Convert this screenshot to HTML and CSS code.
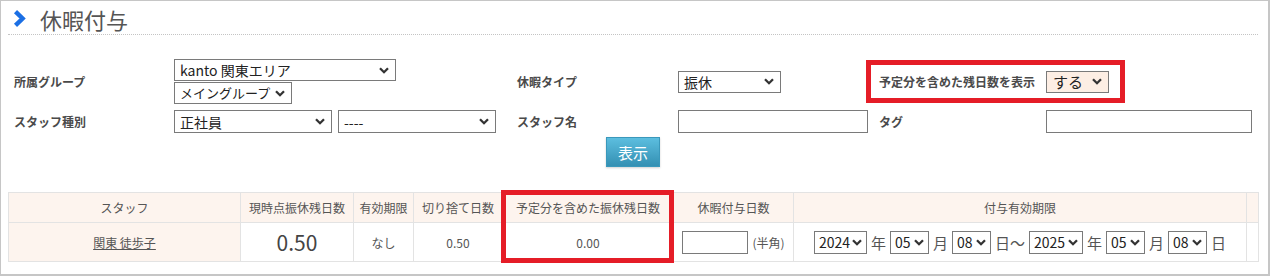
FILE: index.html
```html
<!DOCTYPE html>
<html lang="ja">
<head>
<meta charset="utf-8">
<title>休暇付与</title>
<link rel="stylesheet" href="styles.css">
</head>
<body>
<div class="page">
  <div class="title-bar">
    <svg class="chev" width="14" height="17" viewBox="0 0 14 17"><path d="M2.5 1.6 L9.6 8.5 L2.5 15.4" fill="none" stroke="#1b6fe4" stroke-width="4.4" stroke-linejoin="miter"/></svg>
    <h1 class="title">休暇付与</h1>
  </div>

  <div class="search">
    <div class="lbl">所属グループ</div>
    <div class="field stack">
      <select class="sel w-area"><option>kanto 関東エリア</option></select>
      <select class="sel w-group"><option>メイングループ</option></select>
    </div>
    <div class="lbl">休暇タイプ</div>
    <div class="field"><select class="sel w-type"><option>振休</option></select></div>
    <div class="lbl">予定分を含めた残日数を表示</div>
    <div class="field"><select class="sel w-show"><option>する</option></select></div>

    <div class="lbl">スタッフ種別</div>
    <div class="field pair">
      <select class="sel w-kind"><option>正社員</option></select>
      <select class="sel w-kind"><option>----</option></select>
    </div>
    <div class="lbl">スタッフ名</div>
    <div class="field"><input class="txt w-name" type="text"></div>
    <div class="lbl">タグ</div>
    <div class="field"><input class="txt w-tag" type="text"></div>
  </div>

  <div class="actions"><button class="btn" type="button">表示</button></div>

  <table class="list">
    <colgroup>
      <col class="c-staff"><col class="c-now"><col class="c-exp"><col class="c-cut"><col class="c-plan"><col class="c-grant"><col class="c-period"><col class="c-end">
    </colgroup>
    <thead>
      <tr>
        <th>スタッフ</th>
        <th>現時点振休残日数</th>
        <th>有効期限</th>
        <th>切り捨て日数</th>
        <th>予定分を含めた振休残日数</th>
        <th>休暇付与日数</th>
        <th>付与有効期限</th>
        <th></th>
      </tr>
    </thead>
    <tbody>
      <tr>
        <td class="staff"><a href="#">関東 徒歩子</a></td>
        <td class="big">0.50</td>
        <td>なし</td>
        <td>0.50</td>
        <td>0.00</td>
        <td><span class="grant"><input class="txt w-days" type="text"><span class="note">(半角)</span></span></td>
        <td>
          <div class="dates">
            <select class="sel ds w-year"><option>2024</option></select><span>年</span>
            <select class="sel ds w-md"><option>05</option></select><span>月</span>
            <select class="sel ds w-md"><option>08</option></select><span>日～</span>
            <select class="sel ds w-year2"><option>2025</option></select><span>年</span>
            <select class="sel ds w-md"><option>05</option></select><span>月</span>
            <select class="sel ds w-md"><option>08</option></select><span>日</span>
          </div>
        </td>
        <td></td>
      </tr>
    </tbody>
  </table>

  <div class="mark mark-opt"></div>
  <div class="mark mark-col"></div>
</div>
</body>
</html>
```

FILE: styles.css
```css
html, body {
  margin: 0;
  padding: 0;
  background: #fff;
}

body {
  font-family: "Noto Sans CJK JP", "Noto Sans", sans-serif;
  color: #444;
}

.page {
  position: relative;
  box-sizing: border-box;
  width: 1270px;
  height: 276px;
  border-style: solid;
  border-color: #c6c6c6;
  border-width: 1px 2px 2px 1px;
  background: #fff;
}

/* title */
.title-bar {
  display: flex;
  align-items: center;
  box-sizing: border-box;
  height: 34px;
  margin: 0 10px 0 7px;
  padding: 2px 0 0 5px;
  border-bottom: 1px dotted #c4c4c4;
}

.chev {
  display: block;
  margin-right: 13px;
}

.title {
  margin: 0;
  font-size: 22px;
  font-weight: normal;
  line-height: 1;
  color: #555;
}

/* search form */
.search {
  display: grid;
  grid-template-columns: 160px 343px 161px 201px 167px 206px;
  grid-template-rows: 45px 23px;
  row-gap: 6px;
  align-items: center;
  margin: 24px 0 0 13px;
}

.lbl {
  font-size: 12px;
  font-weight: bold;
  color: #4a4a4a;
  line-height: 1;
}

.field {
  display: flex;
  align-items: center;
}

.stack {
  flex-direction: column;
  align-items: flex-start;
  gap: 1px;
}

.pair {
  gap: 6px;
}

.sel {
  -webkit-appearance: none;
  appearance: none;
  box-sizing: border-box;
  height: 22px;
  margin: 0;
  padding: 0 18px 0 5px;
  border: 1px solid #7a7a7a;
  border-radius: 0;
  background: #fff url("data:image/svg+xml,%3Csvg xmlns='http://www.w3.org/2000/svg' width='10' height='7' viewBox='0 0 10 7'%3E%3Cpath d='M1 1.2 5 5.2 9 1.2' fill='none' stroke='%23333' stroke-width='2.3'/%3E%3C/svg%3E") no-repeat right 6px center;
  font-family: "Noto Sans CJK JP", "Noto Sans", sans-serif;
  font-size: 14px;
  line-height: 20px;
  color: #222;
}

.w-area { width: 222px; }
.w-group { width: 118px; font-size: 13px; padding-right: 12px; background-position: right 6px center; }
.w-type { width: 103px; }
.w-show { width: 63px; background-color: #fdeee4; font-size: 15px; padding-left: 6px; }
.w-kind { width: 158px; height: 23px; }

.txt {
  box-sizing: border-box;
  height: 23px;
  margin: 0;
  padding: 0 4px;
  border: 1px solid #7a7a7a;
  border-radius: 0;
  background: #fff;
  font-family: "Noto Sans CJK JP", "Noto Sans", sans-serif;
  font-size: 13px;
}

.w-name { width: 190px; }
.w-tag { width: 206px; }

/* button */
.actions {
  width: 1238px;
  margin: 4px 0 0 13px;
  display: flex;
  justify-content: center;
}

.btn {
  box-sizing: border-box;
  width: 54px;
  height: 30px;
  padding: 0;
  border: 1px solid #3a98bb;
  border-radius: 0;
  background: linear-gradient(#5cbedf, #3490b3);
  box-shadow: 0 1px 2px rgba(0, 0, 0, 0.18);
  color: #fff;
  font-family: "Noto Sans CJK JP", "Noto Sans", sans-serif;
  font-size: 15px;
  line-height: 1;
}

/* table */
.list {
  margin: 25px 0 0 7px;
  width: 1250px;
  table-layout: fixed;
  border-collapse: collapse;
  border: 1px solid #e3e3e3;
}

.c-staff { width: 232px; }
.c-now { width: 113px; }
.c-exp { width: 60px; }
.c-cut { width: 89px; }
.c-plan { width: 171px; }
.c-grant { width: 120px; }
.c-period { width: 453px; }
.c-end { width: 12px; }

.list th,
.list td {
  border: 1px solid #e3e3e3;
  padding: 0;
  text-align: center;
  vertical-align: middle;
  font-size: 12px;
  color: #555;
}

.list th {
  height: 29px;
  font-weight: normal;
  background: #fdf4ee;
}

.list td {
  height: 38px;
}

.list td.staff {
  background: #fdf4ee;
}

.staff a {
  color: #555;
  text-decoration: underline;
}

.list td.big {
  font-size: 21px;
  color: #444;
}

.grant {
  display: inline-flex;
  align-items: center;
  gap: 4px;
}

.w-days { width: 66px; }

.note {
  font-size: 12px;
  color: #555;
}

.dates {
  display: flex;
  justify-content: center;
  align-items: center;
  gap: 4px;
  font-size: 15px;
  color: #555;
}

.ds {
  height: 23px;
  font-size: 14px;
  padding: 0 14px 0 4px;
  background-position: right 4px center;
}

.w-year { width: 53px; }
.w-year2 { width: 54px; }
.w-md { width: 39px; }

/* red annotation boxes drawn over the content */
.mark {
  position: absolute;
  box-sizing: border-box;
  border: 5px solid #e51d27;
  pointer-events: none;
}

.mark-opt {
  left: 865px;
  top: 59px;
  width: 259px;
  height: 43px;
}

.mark-col {
  left: 500px;
  top: 189px;
  width: 173px;
  height: 73px;
}
```
